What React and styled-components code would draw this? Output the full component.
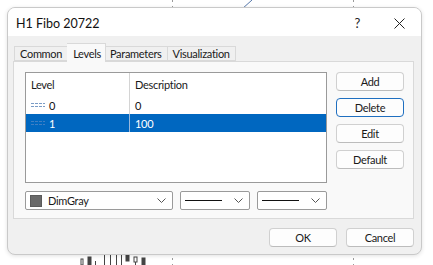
import React from "react";
import styled, { createGlobalStyle } from "styled-components";

const Global = createGlobalStyle`
  html, body { margin: 0; padding: 0; background: #fff; }
  body {
    font-family: Lato, "Noto Sans", sans-serif;
    font-size: 11px;
    letter-spacing: -0.3px;
    color: #1a1a1a;
  }
`;

const levels = [
  { level: "0", desc: "0" },
  { level: "1", desc: "100" },
];

const tabs = ["Common", "Levels", "Parameters", "Visualization"];
const sideButtons = ["Add", "Delete", "Edit", "Default"];

const Chart = () => (
  <ChartLayer width="433" height="265" viewBox="0 0 433 265">
    <line x1="172.5" y1="0" x2="172.5" y2="265" stroke="#9a9a9a" strokeDasharray="2 4" />
    <line x1="353.5" y1="0" x2="353.5" y2="265" stroke="#9a9a9a" strokeDasharray="2 4" />
    <line x1="242" y1="9" x2="252" y2="0" stroke="#5577aa" />
    <g fill="#444" stroke="#444">
      <rect x="81" y="259" width="2" height="6" fill="#fff" />
      <rect x="88" y="257" width="3" height="8" />
      <line x1="95.5" y1="261" x2="95.5" y2="265" />
      <line x1="104.5" y1="255" x2="104.5" y2="265" />
      <line x1="110.5" y1="255" x2="110.5" y2="265" />
      <line x1="116.5" y1="255" x2="116.5" y2="265" />
      <line x1="121.5" y1="255" x2="121.5" y2="265" />
      <rect x="126" y="255" width="3" height="6" />
      <rect x="134" y="257" width="3" height="5" fill="#fff" />
      <line x1="135.5" y1="262" x2="135.5" y2="265" />
      <rect x="142" y="258" width="3" height="7" />
    </g>
  </ChartLayer>
);

const Chevron = () => (
  <svg width="9" height="6" viewBox="0 0 9 6">
    <path d="M0.5 0.5 L4.5 4.5 L8.5 0.5" fill="none" stroke="#555" strokeWidth="1" />
  </svg>
);

const DashIcon = ({ selected }) => (
  <svg width="14" height="6" viewBox="0 0 14 6">
    <g stroke={selected ? "#3f7fc4" : "#7a9cc6"} strokeWidth="1" strokeDasharray="3 1">
      <line x1="0" y1="1.5" x2="14" y2="1.5" />
      <line x1="0" y1="4.5" x2="14" y2="4.5" />
    </g>
  </svg>
);

export default function App() {
  return (
    <>
      <Global />
      <Desktop>
        <Chart />
        <Dialog>
          <TitleBar>
            <Title>H1 Fibo 20722</Title>
            <TitleIcons>
              <span>?</span>
              <svg width="11" height="11" viewBox="0 0 11 11">
                <path d="M0.5 0.5 L10.5 10.5 M10.5 0.5 L0.5 10.5" stroke="#222" strokeWidth="1" />
              </svg>
            </TitleIcons>
          </TitleBar>
          <Body>
            <TabStrip>
              {tabs.map((t) => (
                <Tab key={t} active={t === "Levels"}>{t}</Tab>
              ))}
            </TabStrip>
            <Panel>
              <TopRow>
                <List>
                  <HeaderRow>
                    <Cell>Level</Cell>
                    <Cell>Description</Cell>
                  </HeaderRow>
                  {levels.map((l, i) => (
                    <Row key={l.level} selected={i === 1}>
                      <Cell>
                        <DashIcon selected={i === 1} />
                        <span>{l.level}</span>
                      </Cell>
                      <Cell>{l.desc}</Cell>
                    </Row>
                  ))}
                </List>
                <SideColumn>
                  {sideButtons.map((b) => (
                    <Button key={b} focused={b === "Delete"}>{b}</Button>
                  ))}
                </SideColumn>
              </TopRow>
              <ComboRow>
                <Combo width={148}>
                  <Swatch />
                  <ComboText>DimGray</ComboText>
                  <Chevron />
                </Combo>
                <Combo width={70}>
                  <LineSample />
                  <Chevron />
                </Combo>
                <Combo width={70}>
                  <LineSample />
                  <Chevron />
                </Combo>
              </ComboRow>
            </Panel>
            <Footer>
              <Button>OK</Button>
              <Button>Cancel</Button>
            </Footer>
          </Body>
        </Dialog>
      </Desktop>
    </>
  );
}

const Desktop = styled.div`
  position: relative;
  width: 433px;
  height: 265px;
  overflow: hidden;
  padding: 7px 0 0 7px;
  box-sizing: border-box;
`;

const ChartLayer = styled.svg`
  position: absolute;
  left: 0;
  top: 0;
`;

const Dialog = styled.div`
  position: relative;
  width: 415px;
  height: 248px;
  box-sizing: border-box;
  border: 1px solid #c9c9c9;
  border-radius: 8px;
  background: #f0f0f0;
  overflow: hidden;
  display: flex;
  flex-direction: column;
  box-shadow: 0 1px 4px rgba(0, 0, 0, 0.12);
`;

const TitleBar = styled.div`
  height: 28px;
  background: #fff;
  display: flex;
  align-items: center;
  justify-content: space-between;
  padding: 0 16px 0 8px;
  flex-shrink: 0;
`;

const Title = styled.div`
  font-size: 12.5px;
  letter-spacing: 0;
  color: #111;
  padding-top: 2px;
`;

const TitleIcons = styled.div`
  display: flex;
  align-items: center;
  gap: 34px;
  font-size: 13px;
  color: #222;
  padding-top: 2px;
`;

const Body = styled.div`
  flex: 1;
  display: flex;
  flex-direction: column;
  padding: 7px 7px 0 5px;
`;

const TabStrip = styled.div`
  display: flex;
  align-items: flex-end;
  height: 18px;
  padding-left: 1px;
`;

const Tab = styled.div`
  height: ${(p) => (p.active ? "19px" : "15px")};
  margin: ${(p) => (p.active ? "0 -1px -1px -1px" : "0")};
  padding: ${(p) => (p.active ? "0 4px 0 6px" : "0 5px")};
  box-sizing: border-box;
  display: flex;
  align-items: center;
  border: 1px solid #d9d9d9;
  border-bottom: ${(p) => (p.active ? "none" : "1px solid #d9d9d9")};
  background: ${(p) => (p.active ? "#f9f9f9" : "#f0f0f0")};
  position: relative;
  z-index: ${(p) => (p.active ? 1 : 0)};
  color: #1a1a1a;
  & + & { border-left: none; }
`;

const Panel = styled.div`
  height: 158px;
  box-sizing: border-box;
  border: 1px solid #d9d9d9;
  background: #f9f9f9;
  padding: 10px 9px 0 11px;
  display: flex;
  flex-direction: column;
  gap: 8px;
`;

const TopRow = styled.div`
  display: flex;
  gap: 9px;
`;

const List = styled.div`
  width: 303px;
  height: 111px;
  box-sizing: border-box;
  border: 1px solid #9a9a9a;
  background: #fff;
`;

const HeaderRow = styled.div`
  display: grid;
  grid-template-columns: 104px 1fr;
  height: 23px;
  & > div { border-right: 1px solid #d4d4d4; }
  & > div:last-child { border-right: none; }
`;

const Row = styled.div`
  display: grid;
  grid-template-columns: 104px 1fr;
  height: 18px;
  background: ${(p) => (p.selected ? "#0067c0" : "transparent")};
  color: ${(p) => (p.selected ? "#fff" : "#111")};
  & > div:first-child { border-right: 1px solid ${(p) => (p.selected ? "#9ab8dc" : "#d4d4d4")}; }
`;

const Cell = styled.div`
  display: flex;
  align-items: center;
  gap: 4px;
  padding-left: 5px;
`;

const SideColumn = styled.div`
  display: flex;
  flex-direction: column;
  gap: 7px;
`;

const Button = styled.button`
  width: 68px;
  height: 19px;
  box-sizing: border-box;
  background: #fdfdfd;
  border: 1px solid ${(p) => (p.focused ? "#1f6fc0" : "#d0d0d0")};
  border-bottom-color: ${(p) => (p.focused ? "#1f6fc0" : "#bcbcbc")};
  border-radius: 4px;
  font-family: Lato, "Noto Sans", sans-serif;
  font-size: 11px;
  letter-spacing: -0.3px;
  color: #1a1a1a;
  padding: 0;
`;

const ComboRow = styled.div`
  display: flex;
  gap: 7px;
`;

const Combo = styled.div`
  width: ${(p) => p.width}px;
  height: 19px;
  box-sizing: border-box;
  border: 1px solid #9a9a9a;
  border-radius: 2px;
  background: #fff;
  display: flex;
  align-items: center;
  padding: 0 6px 0 4px;
  gap: 6px;
`;

const Swatch = styled.div`
  width: 10px;
  height: 10px;
  background: #696969;
  border: 1px solid #5a5a5a;
`;

const ComboText = styled.span`
  flex: 1;
`;

const LineSample = styled.div`
  flex: 1;
  height: 1px;
  background: #111;
  margin-right: 6px;
`;

const Footer = styled.div`
  display: flex;
  justify-content: flex-end;
  gap: 9px;
  padding-top: 9px;
`;
